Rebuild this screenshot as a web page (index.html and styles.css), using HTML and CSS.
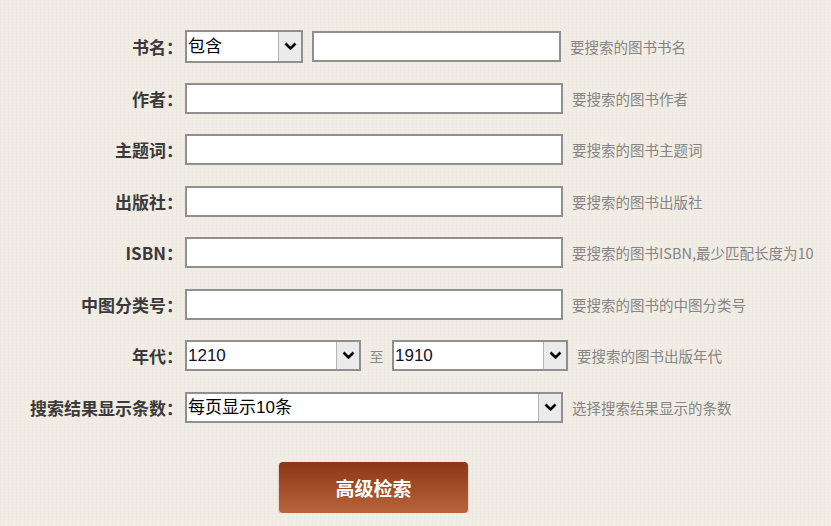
FILE: index.html
```html
<!DOCTYPE html>
<html lang="zh-CN">
<head>
    <meta charset="UTF-8">
    <title>高级检索</title>
    <link rel="stylesheet" href="styles.css">
</head>
<body>
    <form class="search-form">
        <div class="row">
            <label class="label">书名：</label>
            <div class="select select-small">
                <select><option>包含</option></select>
                <span class="arrow"><svg width="13" height="9" viewBox="0 0 13 9"><path d="M1.5 1.5 L6.5 6.5 L11.5 1.5" fill="none" stroke="#000" stroke-width="2.6"/></svg></span>
            </div>
            <input type="text" class="input input-short">
            <span class="hint">要搜索的图书书名</span>
        </div>
        <div class="row">
            <label class="label">作者：</label>
            <input type="text" class="input">
            <span class="hint">要搜索的图书作者</span>
        </div>
        <div class="row">
            <label class="label">主题词：</label>
            <input type="text" class="input">
            <span class="hint">要搜索的图书主题词</span>
        </div>
        <div class="row">
            <label class="label">出版社：</label>
            <input type="text" class="input">
            <span class="hint">要搜索的图书出版社</span>
        </div>
        <div class="row">
            <label class="label">ISBN：</label>
            <input type="text" class="input">
            <span class="hint">要搜索的图书ISBN,最少匹配长度为10</span>
        </div>
        <div class="row">
            <label class="label">中图分类号：</label>
            <input type="text" class="input">
            <span class="hint">要搜索的图书的中图分类号</span>
        </div>
        <div class="row">
            <label class="label">年代：</label>
            <div class="select select-year">
                <select><option>1210</option></select>
                <span class="arrow"><svg width="13" height="9" viewBox="0 0 13 9"><path d="M1.5 1.5 L6.5 6.5 L11.5 1.5" fill="none" stroke="#000" stroke-width="2.6"/></svg></span>
            </div>
            <span class="to">至</span>
            <div class="select select-year">
                <select><option>1910</option></select>
                <span class="arrow"><svg width="13" height="9" viewBox="0 0 13 9"><path d="M1.5 1.5 L6.5 6.5 L11.5 1.5" fill="none" stroke="#000" stroke-width="2.6"/></svg></span>
            </div>
            <span class="hint">要搜索的图书出版年代</span>
        </div>
        <div class="row">
            <label class="label">搜索结果显示条数：</label>
            <div class="select select-wide">
                <select><option>每页显示10条</option></select>
                <span class="arrow"><svg width="13" height="9" viewBox="0 0 13 9"><path d="M1.5 1.5 L6.5 6.5 L11.5 1.5" fill="none" stroke="#000" stroke-width="2.6"/></svg></span>
            </div>
            <span class="hint">选择搜索结果显示的条数</span>
        </div>
        <div class="actions">
            <button type="button" class="btn-search">高级检索</button>
        </div>
    </form>
</body>
</html>
```

FILE: styles.css
```css
body {
    margin: 0;
    background-color: #f0ebe3;
    background-image:
        repeating-linear-gradient(0deg, rgba(255, 255, 255, 0.12) 0 1px, transparent 1px 3px),
        repeating-linear-gradient(90deg, rgba(200, 190, 170, 0.04) 0 1px, transparent 1px 4px);
    font-family: "Noto Sans CJK SC", "Liberation Sans", sans-serif;
    color: #333;
}

.search-form {
    padding-top: 21px;
}

.row {
    display: flex;
    align-items: center;
    height: 51.5px;
}

/* full-width colon leaves blank space on its right, so the box runs a bit past the text */
.label {
    width: 183px;
    text-align: right;
    font-size: 17px;
    font-weight: bold;
    color: #3a3a3a;
    margin-right: 2px;
    white-space: nowrap;
}

.input {
    box-sizing: border-box;
    width: 378px;
    height: 31px;
    border: 2px solid #8f8f8f;
    background: #fff;
    padding: 0 4px;
    margin: 0;
}

.input-short {
    width: 249px;
    margin-left: 9px;
}

.hint {
    margin-left: 9px;
    font-size: 14.5px;
    color: #858585;
    white-space: nowrap;
}

.select {
    box-sizing: border-box;
    display: flex;
    height: 33px;
    border: 2px solid #8f8f8f;
    background: #fff;
}

.select select {
    flex: 1;
    min-width: 0;
    appearance: none;
    -webkit-appearance: none;
    border: none;
    outline: none;
    background: #fff;
    font-family: "Liberation Sans", "Noto Sans CJK SC", sans-serif;
    font-size: 17px;
    color: #000;
    padding: 0 1px;
    margin: 0;
}

.select .arrow {
    width: 22px;
    display: flex;
    align-items: center;
    justify-content: center;
    background: #ebebeb;
    border-left: 1px solid #b5b5b5;
}

.select-small {
    width: 118px;
}

.select-year {
    width: 176px;
    height: 31px;
}

.select-year select {
    color: #101030;
}

.select-wide {
    width: 378px;
    height: 31px;
}

.to {
    width: 31px;
    text-align: center;
    font-size: 14px;
    color: #888;
}

.actions {
    margin-top: 29px;
    padding-left: 279px;
}

.btn-search {
    width: 189px;
    height: 51px;
    border: none;
    border-radius: 4px;
    background: linear-gradient(to bottom, #8b3718 0%, #a24d27 50%, #b8643b 100%);
    box-shadow: 0 1px 2px rgba(90, 40, 20, 0.35);
    color: #fff;
    font-family: "Noto Sans CJK SC", sans-serif;
    font-size: 19px;
    font-weight: bold;
    cursor: pointer;
}
```
